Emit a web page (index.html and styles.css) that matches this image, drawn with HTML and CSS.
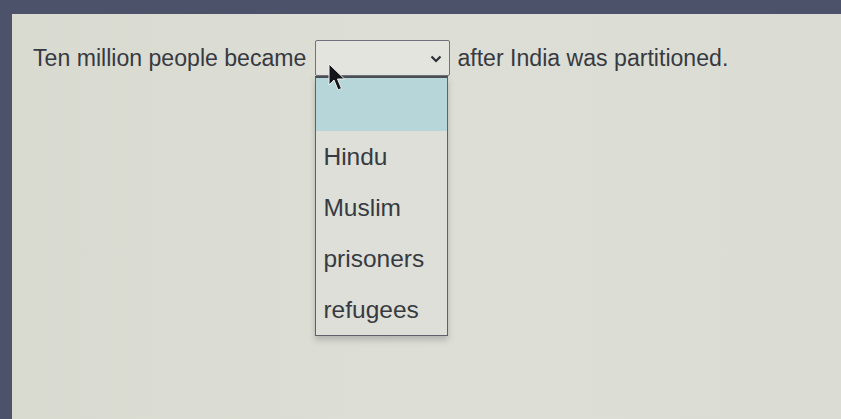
FILE: index.html
```html
<!DOCTYPE html>
<html>
<head>
<meta charset="utf-8">
<link rel="stylesheet" href="styles.css">
</head>
<body>
<div class="page">
  <div class="sentence">
    <span class="txt">Ten million people became</span>
    <span class="select">
      <svg class="chev" width="12" height="8" viewBox="0 0 12 8"><path d="M1.5 1.5 L6 6 L10.5 1.5" fill="none" stroke="#2c2f36" stroke-width="2.2"/></svg>
      <div class="menu">
        <div class="opt sel"></div>
        <div class="opt">Hindu</div>
        <div class="opt">Muslim</div>
        <div class="opt">prisoners</div>
        <div class="opt">refugees</div>
      </div>
      <svg class="cursor" width="20" height="30" viewBox="0 0 20 30"><path d="M1 1 L1 22 L6 17 L10 27 L13.5 25.5 L9.5 16 L16.5 16 Z" fill="#15161a" stroke="#f0f0f0" stroke-width="1"/></svg>
    </span>
    <span class="txt">after India was partitioned.</span>
  </div>
</div>
</body>
</html>
```
FILE: styles.css
```css
html, body {
  margin: 0;
  padding: 0;
}
body {
  background: #4c526a;
  width: 841px;
  height: 419px;
  overflow: hidden;
  padding: 14px 0 0 12px;
  box-sizing: border-box;
}
.page {
  height: 405px;
  background: linear-gradient(90deg, #d9dad0 0%, #dddeD5 50%, #dbdcd4 100%);
  padding: 26px 0 0 21px;
  box-sizing: border-box;
  font-family: "Liberation Sans", Arial, sans-serif;
  color: #373a41;
}
.sentence {
  display: flex;
  align-items: center;
  font-size: 23.1px;
}
.select {
  position: relative;
  display: block;
  width: 135px;
  height: 36px;
  box-sizing: border-box;
  border: 1px solid #6f7278;
  border-radius: 2px;
  background: #e3e4dd;
  margin: 0 7px 0 9px;
}
.chev {
  position: absolute;
  right: 7px;
  top: 14px;
}
.menu {
  position: absolute;
  top: 35px;
  left: -1px;
  width: 133px;
  box-sizing: border-box;
  border: 1.5px solid #5e6268;
  border-top: 2px solid #4a4e55;
  background: #dddfd8;
  box-shadow: 0 4px 6px rgba(60, 60, 70, 0.25);
  font-size: 24.5px;
}
.opt {
  height: 51px;
  line-height: 51px;
  padding-left: 7px;
}
.opt.sel {
  height: 53px;
  background: #b7d6da;
}
.cursor {
  position: absolute;
  left: 12px;
  top: 22px;
}
```
